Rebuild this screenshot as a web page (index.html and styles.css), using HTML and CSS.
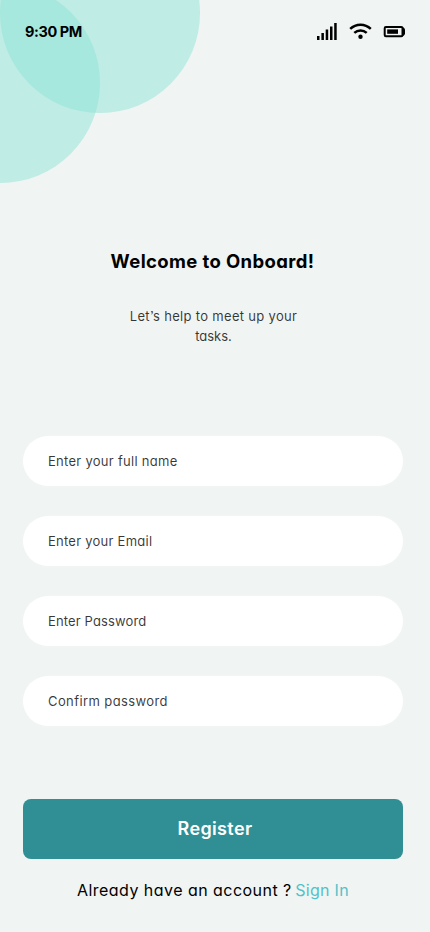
FILE: index.html
```html
<!DOCTYPE html>
<html lang="en">
<head>
<meta charset="utf-8">
<meta name="viewport" content="width=device-width, initial-scale=1">
<title>Register</title>
<link rel="stylesheet" href="styles.css">
</head>
<body>
<main class="screen">
  <div class="circle circle-top"></div>
  <div class="circle circle-left"></div>
  <header class="status">
    <span class="time">9:30 PM</span>
    <svg class="status-icons" width="92" height="20" viewBox="0 0 92 20" aria-hidden="true">
      <path d="M4 18v-4h2.5v4zM8.4 18v-7h2.5v7zM12.7 18V7.5h2.5V18zM17 18V4.500h2.500V18zM21.200 18V1h2.500v17z"/>
      <path d="M37.200 6.900C43 1.300 52 1.300 57.800 6.900M41.300 10.900C44.800 7.700 50.200 7.700 53.700 10.900" fill="none" stroke="#000" stroke-width="2.500"/>
      <circle cx="47.500" cy="14.700" r="2.200"/>
      <rect x="71.700" y="5" width="17.800" height="9.200" rx="1.200" fill="none" stroke="#000" stroke-width="2"/>
      <rect x="74.200" y="7.400" width="10.800" height="4.400"/>
      <path d="M89 5.500h1.800l1.200 1.700v4.800l-1.200 1.700H89z"/>
    </svg>
  </header>
  <section class="intro">
    <h1>Welcome to Onboard!</h1>
    <p><span class="line-one">Let’s help to meet up your</span><br><span class="line-two">tasks.</span></p>
  </section>
  <form class="form">
    <input class="field name" type="text" placeholder="Enter your full name">
    <input class="field email" type="email" placeholder="Enter your Email">
    <input class="field password" type="password" placeholder="Enter Password">
    <input class="field confirm" type="password" placeholder="Confirm password">
    <button type="button"><span>Register</span></button>
  </form>
  <p class="account"><span class="question">Already have an account ?</span><a>Sign In</a></p>
</main>
</body>
</html>
```
FILE: styles.css
```css
* { box-sizing: border-box; }
body { margin: 0; }
.screen {
  position: relative;
  width: 430px;
  height: 932px;
  overflow: hidden;
  background: #f0f4f3;
  color: #000;
  font-family: Inter, "Open Sans", sans-serif;
  font-feature-settings: "cv11", "ss03";
}
.circle {
  position: absolute;
  width: 200px;
  height: 200px;
  border-radius: 50%;
  background: rgba(142, 228, 214, .5);
}
.circle-top { left: 0; top: -87px; }
.circle-left { left: -100px; top: -17px; }
.status {
  position: relative;
  display: flex;
  justify-content: space-between;
  align-items: center;
  height: 64px;
  padding: 0 25px;
}
.time {
  padding-bottom: 2px;
  font-size: 14.500px;
  font-weight: 700;
  letter-spacing: -.4px;
}
.status-icons { display: block; }
.intro { height: 372px; padding-top: 183px; text-align: center; }
h1 {
  margin: 0;
  padding-right: 5px;
  font-size: 18.500px;
  line-height: 28px;
  font-weight: 700;
  letter-spacing: .38px;
}
.intro p {
  margin: 31px 0 0;
  padding-right: 3px;
  font-size: 13px;
  line-height: 20px;
  color: rgba(0, 0, 0, .78);
}
.line-one { letter-spacing: .31px; }
.form {
  display: flex;
  flex-direction: column;
  gap: 30px;
  width: 380px;
  margin-left: 23px;
}
.field {
  width: 100%;
  height: 50px;
  padding: 0 25px;
  border: 0;
  border-radius: 25px;
  outline: 0;
  background: #fff;
  font: inherit;
  font-feature-settings: inherit;
  font-size: 13px;
}
.field::placeholder { color: rgba(0, 0, 0, .78); opacity: 1; }
.name { letter-spacing: .28px; }
.email { letter-spacing: .25px; }
.password { letter-spacing: .14px; }
.confirm { letter-spacing: .4px; }
button {
  height: 60px;
  margin-top: 43px;
  padding: 0 0 2px 4px;
  border: 0;
  border-radius: 8px;
  background: #2f8f94;
  color: #fff;
  font: inherit;
  font-feature-settings: inherit;
  font-size: 18px;
  font-weight: 600;
  letter-spacing: .35px;
}
.account {
  display: flex;
  gap: 3.500px;
  margin: 19px 0 0 77px;
  font-size: 16px;
  line-height: 24px;
  white-space: nowrap;
}
.question { letter-spacing: .46px; }
.account a { color: #50c2c9; letter-spacing: .3px; }
```
